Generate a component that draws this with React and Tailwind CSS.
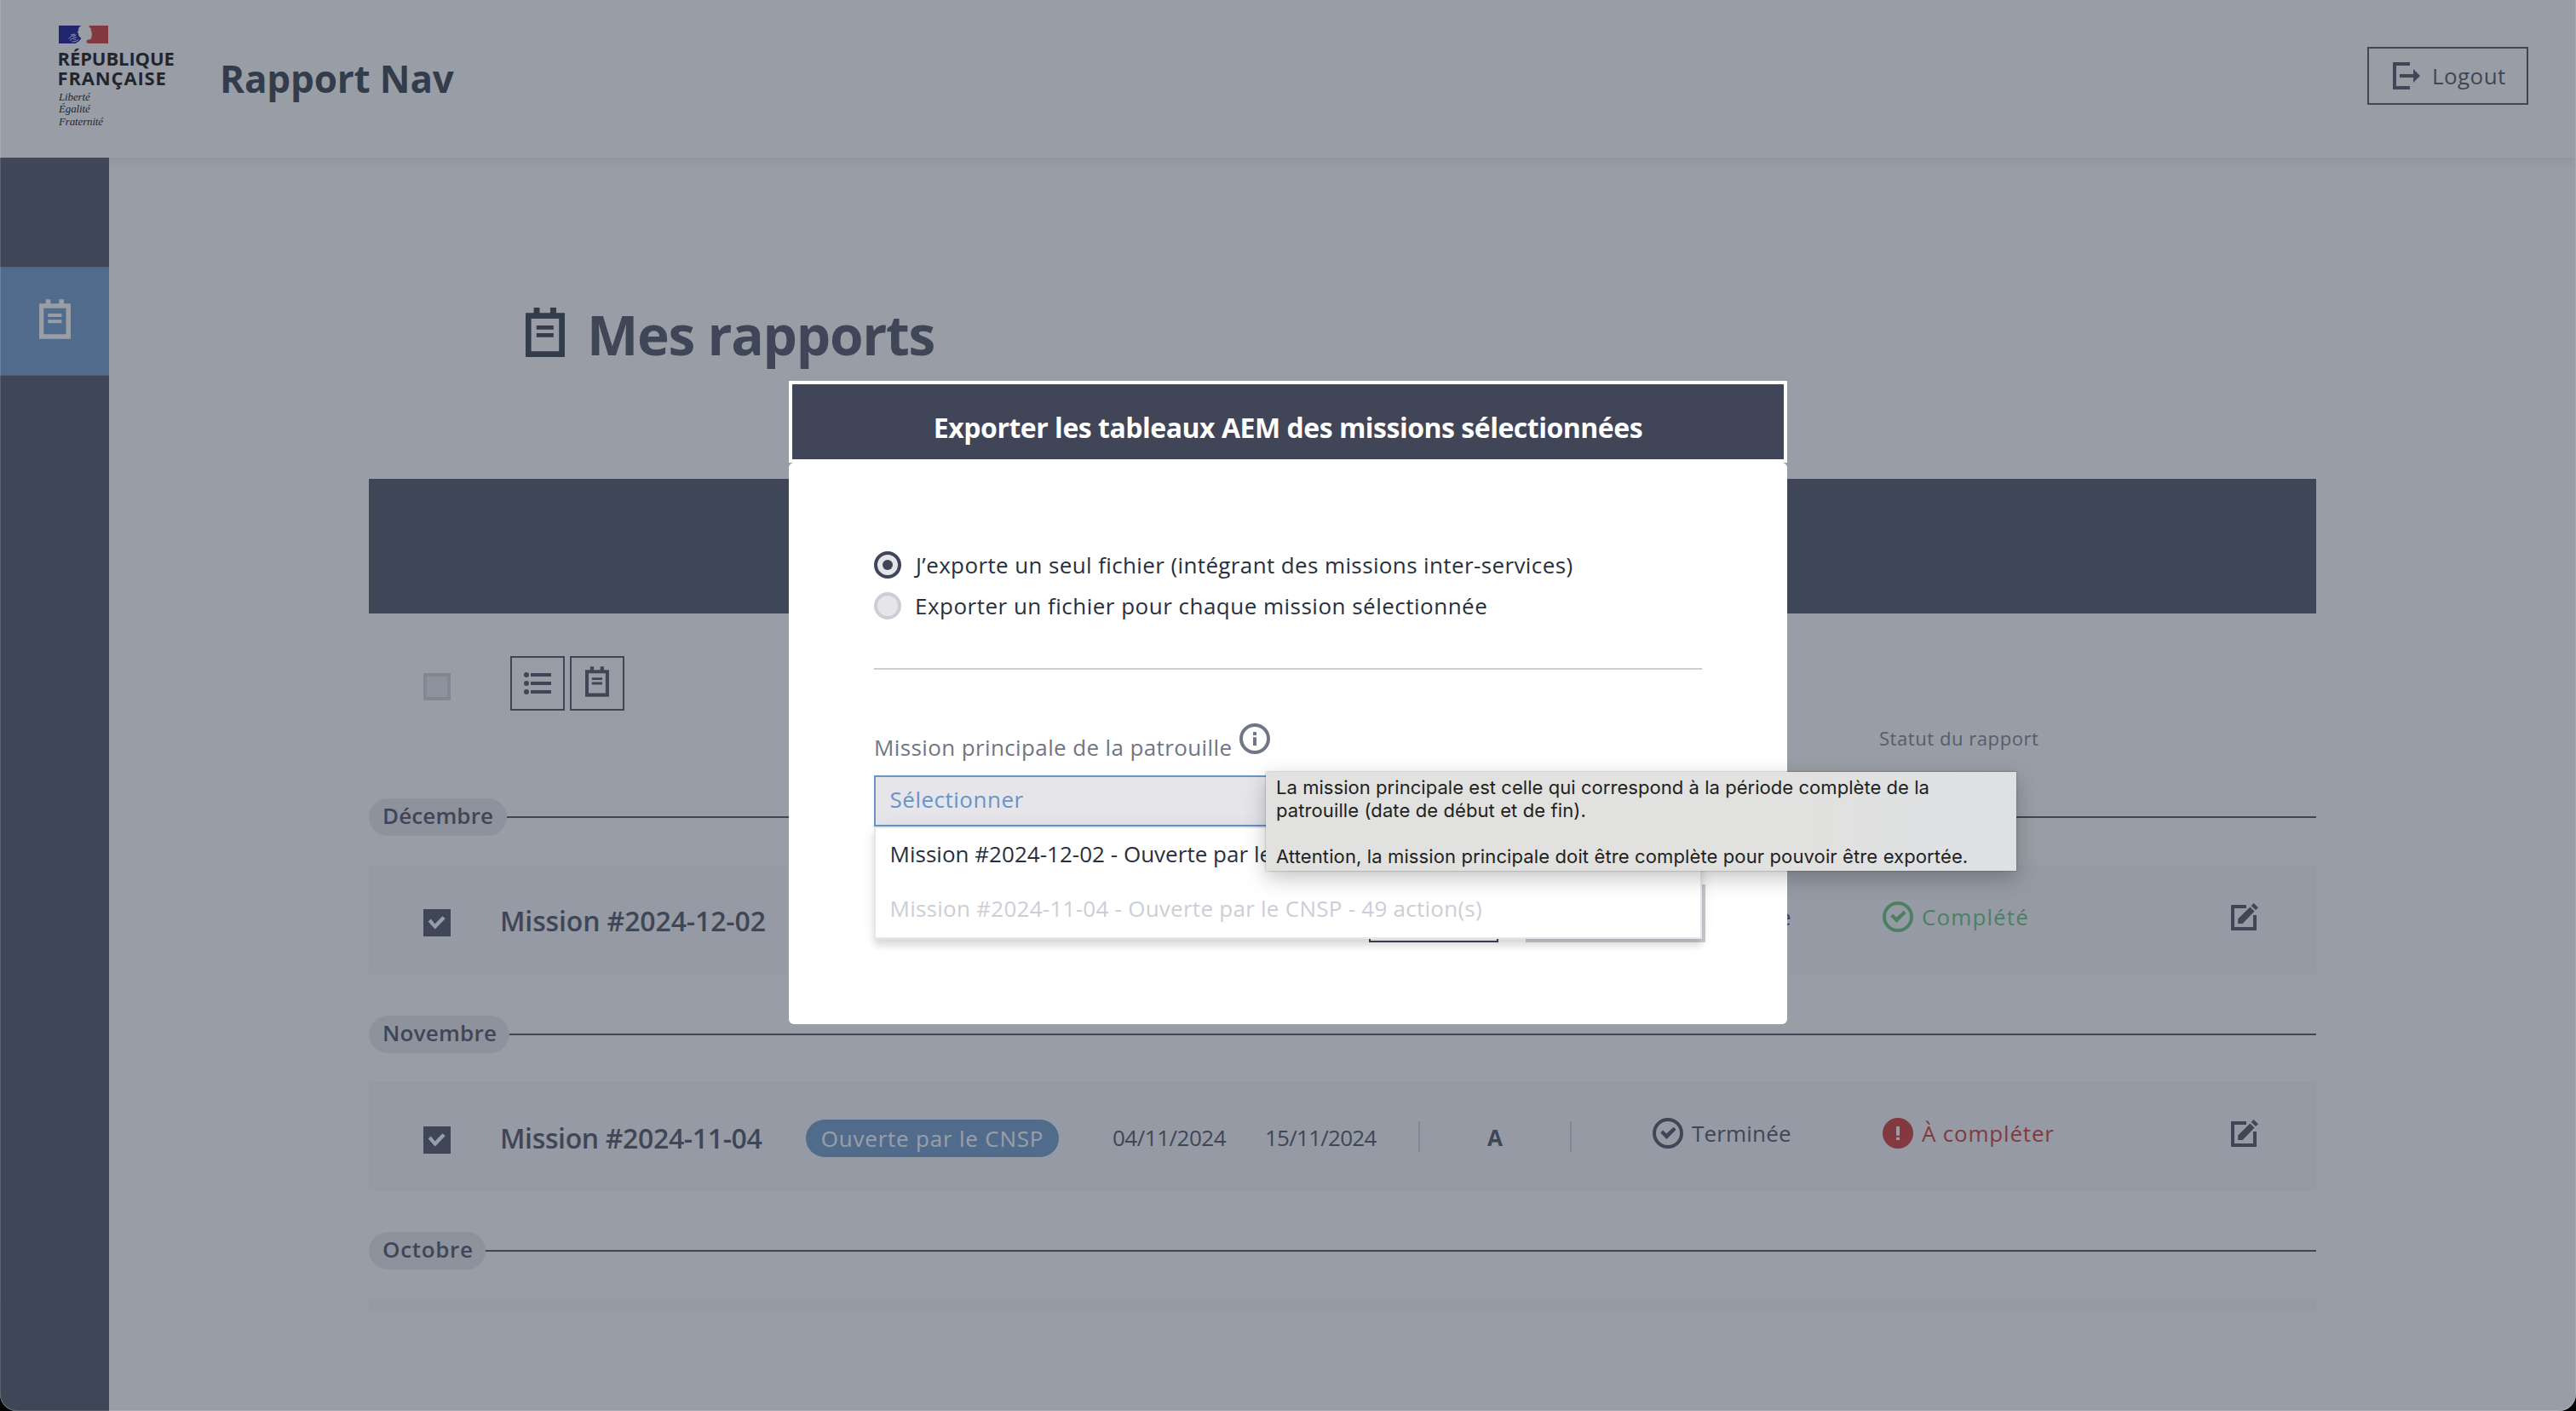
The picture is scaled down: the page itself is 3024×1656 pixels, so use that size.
import clsx from "clsx";

function NotesIcon({ className }) {
  return (
    <svg viewBox="0 0 46 58" className={className} fill="currentColor">
      <path
        fillRule="evenodd"
        d="M0 6.3H9.6V0H16.5V6.3H29V0H36V6.3H46V58H0ZM6.6 13V51.2H39.2V13Z"
      />
      <path d="M12.8 21H32.8V25.8H12.8ZM12.8 30H32.8V34.8H12.8Z" />
    </svg>
  );
}

function ListIcon({ className }) {
  return (
    <svg viewBox="0 0 32 26" className={className} fill="currentColor">
      <circle cx="3" cy="3" r="3" />
      <circle cx="3" cy="13" r="3" />
      <circle cx="3" cy="23" r="3" />
      <path d="M8 1H32V5H8ZM8 11H32V15H8ZM8 21H32V25H8Z" />
    </svg>
  );
}

function LogoutIcon({ className }) {
  return (
    <svg viewBox="0 0 32 32" className={className} fill="currentColor">
      <path d="M0 0H20V4H4V28H20V32H0Z" />
      <path d="M8 14H24V8L32 16L24 24V18H8Z" />
    </svg>
  );
}

function EditIcon({ className }) {
  return (
    <svg viewBox="0 0 32 32" className={className} fill="currentColor">
      <path d="M0 2H18V6H4V28H26V14H30V32H0Z" />
      <path d="M8.2 24V18.6L22.3 4.4L27.6 9.6L13.6 24Z" />
      <path d="M23.7 2.9L26.6 0L32 5.2L29 8.1Z" />
    </svg>
  );
}

function CheckCircleIcon({ className }) {
  return (
    <svg viewBox="0 0 36 36" className={className}>
      <circle cx="18" cy="18" r="16" fill="none" stroke="currentColor" strokeWidth="4" />
      <path
        fill="currentColor"
        d="M9.2 17.5L12.1 14.6L16.2 18.6L24.7 10.8L27.6 13.7L16.5 25Z"
      />
    </svg>
  );
}

function AlertIcon({ className }) {
  return (
    <svg viewBox="0 0 36 36" className={className}>
      <circle cx="18" cy="18" r="18" fill="currentColor" />
      <path fill="#fff" d="M16 10H20V20.8H16ZM16 22.8H20V26H16Z" />
    </svg>
  );
}

function InfoIcon({ className }) {
  return (
    <svg viewBox="0 0 36 36" className={className}>
      <circle cx="18" cy="18" r="16" fill="none" stroke="currentColor" strokeWidth="4" />
      <path fill="currentColor" d="M16 10H20V14H16ZM16 16.2H20V26H16Z" />
    </svg>
  );
}

function Flag() {
  return (
    <svg viewBox="0 0 58 21" className="block h-[21px] w-[58px]">
      <path
        fill="#00008a"
        d="M0 0H26.5C24 1.2 23 3 23.2 5L22 8.2L23.4 9.6L23 11.5C24 13 26 14 26.3 15.5L23.5 18.5L19.5 21H0Z"
      />
      <path
        fill="none"
        stroke="#fff"
        strokeWidth="0.9"
        d="M11.5 15.5L15 12.5L20.5 11M14 11.2L19 10M13 17.5L16 15L20 16.5M17 13.5L21 14M15.5 19L20 18.5L23 16.5"
      />
      <path
        fill="#ce2a24"
        d="M35.6 0H58V21H35C33 20.6 32 19.5 32.6 17.5C34 16 37 16.8 38 15.2C39.3 13 38 11.5 39 9.5C38 7.5 38.6 6 37.2 4.6L38 3.2L36 2.4Z"
      />
    </svg>
  );
}

function Header() {
  return (
    <header className="relative z-10 flex h-[185px] shrink-0 bg-white pl-[69px] shadow-[0_4px_12px_rgba(112,119,133,0.16)]">
      <div className="w-[189px] pt-[30px]">
        <Flag />
        <div className="mt-[6px] -ml-[1.5px] text-[22px] leading-[22.5px] font-bold text-black">
          <div className="tracking-[-0.1px]">RÉPUBLIQUE</div>
          <div className="tracking-[0.84px]">FRANÇAISE</div>
        </div>
        <div className="mt-[5px] font-['Liberation_Serif',serif] text-[13px] leading-[14.4px] tracking-[-0.15px] text-black italic">
          <div>Liberté</div>
          <div>Égalité</div>
          <div>Fraternité</div>
        </div>
      </div>
      <div className="mt-[64px] text-[44px] leading-[56px] font-bold tracking-[-0.16px] text-[#282f3e]">
        Rapport Nav
      </div>
      <button className="mt-[55px] mr-[56px] ml-auto flex h-[68px] w-[189px] border-2 border-[#404558] pt-[16px] pl-[28px] text-[#404558]">
        <LogoutIcon className="size-[32px]" />
        <span className="-mt-px ml-[14px] text-[26px] leading-[34px] tracking-[0.42px]">Logout</span>
      </button>
    </header>
  );
}

function Sidebar() {
  return (
    <nav className="w-[128px] shrink-0 bg-[#404558] pt-[128px]">
      <div className="flex h-[128px] items-start justify-center border-y border-[#707685] bg-[#6794cb] pt-[37px]">
        <NotesIcon className="h-[47px] w-[37px] text-white" />
      </div>
    </nav>
  );
}

function CheckedBox() {
  return (
    <svg viewBox="0 0 32 32" className="mt-[52px] size-[32px]">
      <path fill="#404558" d="M0 0H32V32H0Z" />
      <path fill="#fff" d="M5.7 14.6L8.8 11.6L13.5 17.4L22.4 8.2L25.8 11L13.8 23.6Z" />
    </svg>
  );
}

function Status({ icon: Icon, label, className }) {
  return (
    <div className={clsx("mt-[42.5px] flex h-[36px] text-[26px] leading-[36px] font-medium whitespace-nowrap", className)}>
      <Icon className="mr-[10px] size-[36px] shrink-0" />
      {label}
    </div>
  );
}

function MissionRow({ mission }) {
  return (
    <div className="mt-[34px] grid h-[128px] grid-cols-[89px_360px_360px_179px_180px_275px_270px_409px_1fr] items-start bg-[#f7f7fa] pl-[64px] text-[#404558]">
      {mission && (
        <>
          <CheckedBox />
          <div className={clsx("mt-[46px] pl-px text-[32px] leading-[40px] font-semibold whitespace-nowrap", mission.titleTracking)}>
            {mission.title}
          </div>
          <div>
            {mission.source && (
              <div className="mt-[44.5px] flex h-[44px] w-[297px] items-center justify-center rounded-full bg-[#6794cb] text-[26px] leading-[44px] tracking-[0.79px] text-white">
                {mission.source}
              </div>
            )}
          </div>
          <div className="mt-[47.5px] text-[26px] leading-[36px] tracking-[-0.5px]">{mission.start}</div>
          <div className="mt-[47.5px] text-[26px] leading-[36px] tracking-[-0.75px]">{mission.end}</div>
          <div>
            {mission.crew && (
              <div className="mt-[46.5px] h-[36px] w-[180px] border-x-2 border-[#ccced6] text-center text-[26px] leading-[38px] font-bold">
                {mission.crew}
              </div>
            )}
          </div>
          <Status icon={CheckCircleIcon} label="Terminée" className="tracking-[0.18px]" />
          {mission.complete ? (
            <Status icon={CheckCircleIcon} label="Complété" className="tracking-[1.1px] text-[#5bc074]" />
          ) : (
            <Status icon={AlertIcon} label="À compléter" className="tracking-[0.8px] text-[#ce2a24]" />
          )}
          <EditIcon className="mt-[44.5px] size-[32px]" />
        </>
      )}
    </div>
  );
}

const MONTHS = [
  {
    label: "Décembre",
    pill: "w-[162px] tracking-[0.12px]",
    mission: { title: "Mission #2024-12-02", titleTracking: "tracking-[-0.13px]", complete: true },
  },
  {
    label: "Novembre",
    pill: "w-[165px] tracking-[0.24px]",
    mission: {
      title: "Mission #2024-11-04",
      titleTracking: "tracking-[-0.36px]",
      source: "Ouverte par le CNSP",
      start: "04/11/2024",
      end: "15/11/2024",
      crew: "A",
      complete: false,
    },
  },
  { label: "Octobre", pill: "w-[137px] tracking-[0.68px]", mission: null },
];

function MonthGroup({ month }) {
  return (
    <section className="mb-[48.5px]">
      <div className="flex items-center">
        <div
          className={clsx(
            "h-[44px] rounded-full bg-[#e5e5eb] pl-[16px] text-[26px] leading-[40px] font-semibold text-[#404558]",
            month.pill
          )}
        >
          {month.label}
        </div>
        <div className="h-[2px] flex-1 bg-[#404558]" />
      </div>
      <MissionRow mission={month.mission} />
    </section>
  );
}

function Reports() {
  return (
    <main className="flex-1 pt-[176px] pl-[305px]">
      <div className="w-[2286px]">
        <h1 className="flex h-[64px] items-start pl-[184px] text-[64px] leading-[64px] font-bold tracking-[-1.3px] text-[#404558]">
          <NotesIcon className="mr-[26px] h-[58px] w-[46px] text-[#282f3e]" />
          Mes rapports
        </h1>
        <div className="mt-[137px] h-[158px] bg-[#404558]" />
        <div className="flex h-[217px] items-start pl-[64px] text-[#404558]">
          <div className="mt-[70px] size-[32px] border-4 border-[#ccced6] bg-[#e5e5eb]" />
          <div className="mt-[50px] ml-[70px] flex gap-[6px]">
            <button className="flex size-[64px] justify-center border-2 border-[#404558] pt-[17px]">
              <ListIcon className="h-[26px] w-[32px]" />
            </button>
            <button className="flex size-[64px] justify-center border-2 border-[#404558] pt-[10px]">
              <NotesIcon className="h-[36px] w-[28px]" />
            </button>
          </div>
          <div className="mt-[130.5px] ml-[1473px] text-[22px] leading-[30px] tracking-[0.56px] whitespace-nowrap text-[#707685]">
            Statut du rapport
          </div>
        </div>
        <div className="h-[603px] overflow-hidden">
          {MONTHS.map((month) => (
            <MonthGroup key={month.label} month={month} />
          ))}
        </div>
      </div>
    </main>
  );
}

function Radio({ checked, label, className }) {
  return (
    <label className="flex h-[32px] items-start text-[26px] leading-[32px] font-medium whitespace-nowrap text-[#282f3e]">
      <span
        className={clsx(
          "flex size-[32px] shrink-0 items-center justify-center rounded-full border-4 bg-[#e5e5ea]",
          checked ? "border-[#404558]" : "border-[#ccced6]"
        )}
      >
        {checked && <span className="size-[12px] rounded-full bg-[#404558]" />}
      </span>
      <span className={className}>{label}</span>
    </label>
  );
}

function ExportDialog() {
  return (
    <div className="w-[1172px]">
      <h2 className="h-[96px] border-4 border-white bg-[#404558] pt-[7px] text-center text-[32px] leading-[88px] font-bold tracking-[-0.49px] text-white">
        Exporter les tableaux AEM des missions sélectionnées
      </h2>
      <div className="h-[659px] rounded-[6px] bg-white px-[100px] pt-[104px]">
        <div className="flex flex-col gap-[16px]">
          <Radio
            checked
            label="J’exporte un seul fichier (intégrant des missions inter-services)"
            className="ml-[17px] tracking-[0.38px]"
          />
          <Radio
            label="Exporter un fichier pour chaque mission sélectionnée"
            className="ml-[16px] tracking-[0.49px]"
          />
        </div>
        <div className="mt-[57px] h-[2px] bg-[#ccced6]" />
        <div className="mt-[63px] flex h-[61px] items-start text-[#707685]">
          <div className="w-[429px] pt-[10px] text-[26px] leading-[36px] tracking-[0.38px] whitespace-nowrap">
            Mission principale de la patrouille
          </div>
          <InfoIcon className="size-[36px]" />
        </div>
        <div className="relative">
          <div className="h-[60px] border-2 border-[#6794cb] bg-[#e5e5ea] pl-[16.5px] text-[26px] leading-[52px] tracking-[0.51px] text-[#6794cb]">
            Sélectionner
          </div>
          <ul className="absolute inset-x-0 top-[60px] h-[132px] border-2 border-[#e5e5ea] bg-white pl-[16.5px] text-[26px] leading-[60px] whitespace-nowrap shadow-[0_8px_8px_rgba(0,0,0,0.12),0_0_20px_rgba(0,0,0,0.06)]">
            <li className="h-[64px] font-medium tracking-[0.02px] text-[#282f3e]">
              Mission #2024-12-02 - Ouverte par le CNSP
            </li>
            <li className="h-[64px] tracking-[0.26px] text-[#ccced6]">
              Mission #2024-11-04 - Ouverte par le CNSP - 49 action(s)
            </li>
          </ul>
        </div>
        <div className="mt-[68px] -mr-[4px] flex justify-end gap-[32px]">
          <div className="h-[68px] w-[152px] border-2 border-[#404558]" />
          <div className="h-[68px] w-[211px] bg-[#ccced6]" />
        </div>
      </div>
    </div>
  );
}

function Tooltip() {
  return (
    <div className="absolute top-[906px] left-[1485px] h-[116px] w-[881px] bg-linear-to-r from-[#e1e1df] from-70% to-[#dee0e3] pt-[4.5px] pl-[12px] font-['Inter',sans-serif] text-[22px] leading-[27px] whitespace-nowrap text-[#222] shadow-[0_8px_24px_rgba(0,0,0,0.24),0_0_2px_rgba(0,0,0,0.35)]">
      <p className="tracking-[0.05px]">La mission principale est celle qui correspond à la période complète de la</p>
      <p className="tracking-[0.1px]">patrouille (date de début et de fin).</p>
      <p className="mt-[27px] tracking-[0.12px]">
        Attention, la mission principale doit être complète pour pouvoir être exportée.
      </p>
    </div>
  );
}

export default function App() {
  return (
    <div className="h-[1656px] w-[3024px] overflow-hidden bg-black font-['Open_Sans',sans-serif]">
      <div className="relative flex h-full flex-col overflow-hidden rounded-b-[20px] bg-white">
        <Header />
        <div className="flex flex-1">
          <Sidebar />
          <Reports />
        </div>
        <div className="absolute inset-0 z-20 flex items-start justify-center bg-[#3e4757]/53 pt-[447px]">
          <ExportDialog />
        </div>
        <div className="absolute inset-0 z-30 rounded-b-[20px] border-x border-b border-white/15">
          <Tooltip />
        </div>
      </div>
    </div>
  );
}
